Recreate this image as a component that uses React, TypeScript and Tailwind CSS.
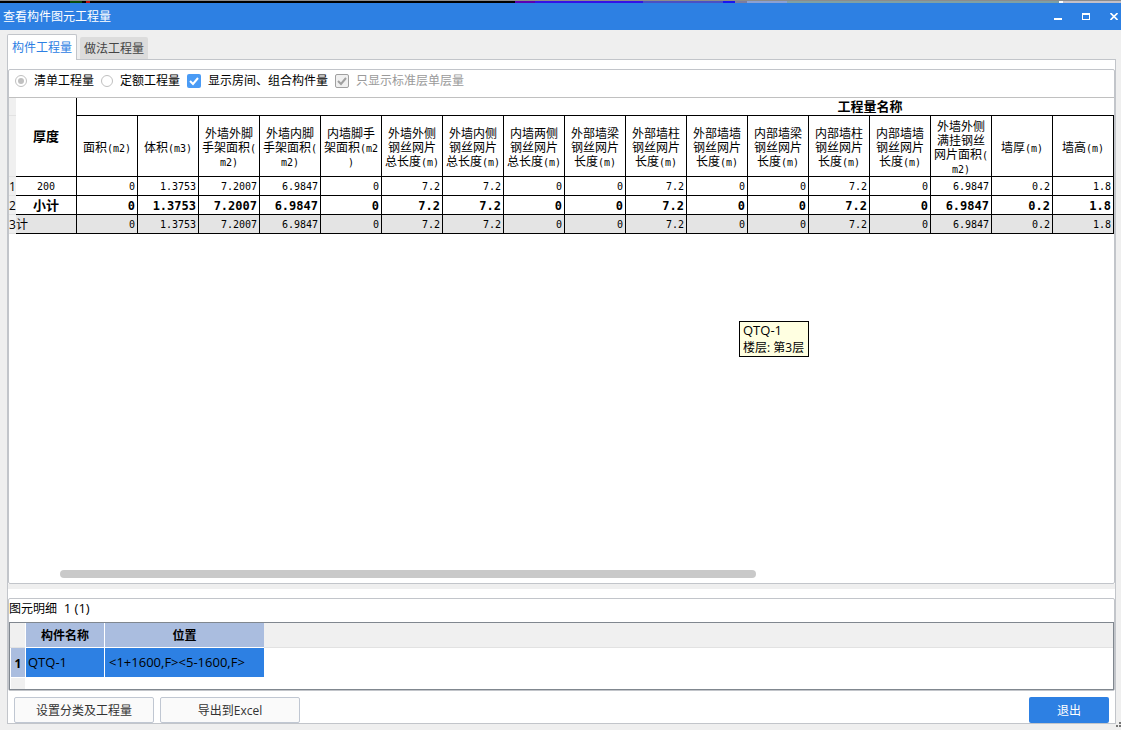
import type { ReactNode } from "react";

const uiFont = "font-['Open_Sans','Noto_Sans_CJK_SC',sans-serif]";
const gridFont = "font-['DejaVu_Sans_Mono','Noto_Sans_CJK_SC',monospace]";

const columns = [
  { lines: ["面积(m2)"], value: "0" },
  { lines: ["体积(m3)"], value: "1.3753" },
  { lines: ["外墙外脚", "手架面积(", "m2)"], value: "7.2007" },
  { lines: ["外墙内脚", "手架面积(", "m2)"], value: "6.9847" },
  { lines: ["内墙脚手", "架面积(m2", ")"], value: "0" },
  { lines: ["外墙外侧", "钢丝网片", "总长度(m)"], value: "7.2" },
  { lines: ["外墙内侧", "钢丝网片", "总长度(m)"], value: "7.2" },
  { lines: ["内墙两侧", "钢丝网片", "总长度(m)"], value: "0" },
  { lines: ["外部墙梁", "钢丝网片", "长度(m)"], value: "0" },
  { lines: ["外部墙柱", "钢丝网片", "长度(m)"], value: "7.2" },
  { lines: ["外部墙墙", "钢丝网片", "长度(m)"], value: "0" },
  { lines: ["内部墙梁", "钢丝网片", "长度(m)"], value: "0" },
  { lines: ["内部墙柱", "钢丝网片", "长度(m)"], value: "7.2" },
  { lines: ["内部墙墙", "钢丝网片", "长度(m)"], value: "0" },
  { lines: ["外墙外侧", "满挂钢丝", "网片面积(", "m2)"], value: "6.9847" },
  { lines: ["墙厚(m)"], value: "0.2" },
  { lines: ["墙高(m)"], value: "1.8" },
];

// the group header runs on past the visible columns
const totalColumns = 26;

const rows = [
  { label: "200", row: "", labelClass: "text-center text-[10px]", valueClass: "text-[10px]" },
  { label: "小计", row: "font-bold", labelClass: "text-center text-[13px]", valueClass: "text-xs" },
  { label: "计", row: "bg-[#e4e4e4]", labelClass: "text-left text-xs", valueClass: "text-[10px]" },
];

// Latin characters are half the width of a Chinese one
function HeaderLine({ text }: { text: string }) {
  const at = text.search(/[(m)]/);
  if (at < 0) return <span className="block">{text}</span>;
  return (
    <span className="block">
      {text.slice(0, at)}
      <span className="text-[10px] leading-none">{text.slice(at)}</span>
    </span>
  );
}

function BackgroundStrip() {
  return (
    <div className="flex h-[3px] border-t border-[#8c8c8c] bg-black">
      <span className="ml-[70px] w-3 bg-[#0a4a0a]" />
      <span className="ml-1 w-1 bg-[#c01010]" />
      <span className="ml-[425px] w-5 bg-[#5a00b4]" />
      <span className="w-[108px] bg-[#3412e6]" />
      <span className="w-20 bg-[#4a50c4]" />
      <span className="w-3 bg-[#1a14f0]" />
      <span className="w-3 bg-[#7c7ca0]" />
      <span className="w-10 bg-[#8ba0d4]" />
      <span className="flex-1 bg-[#7fa0a4]" />
      <span className="w-1 bg-white" />
      <span className="w-[58px] bg-[#c4c0c8]" />
    </div>
  );
}

function TitleBar() {
  return (
    <header className="flex h-[27px] items-center justify-between bg-[#2d80e3] pr-[3px] pl-[3px] text-white">
      <h1 className="text-xs">查看构件图元工程量</h1>
      <div className="flex gap-5">
        <button aria-label="最小化">
          <svg width="8" height="7" viewBox="0 0 8 7" fill="currentColor" shapeRendering="crispEdges">
            <path d="M0 5h8v2H0z" />
          </svg>
        </button>
        <button aria-label="最大化">
          <svg width="8" height="7" viewBox="0 0 8 7" fill="currentColor" shapeRendering="crispEdges">
            <path fillRule="evenodd" d="M0 0h8v7H0zM1 2v4h6V2z" />
          </svg>
        </button>
        <button aria-label="关闭">
          <svg width="8" height="7" viewBox="0 0 8 7" stroke="currentColor" strokeWidth="1.6">
            <path d="M.5 0l7 7M7.5 0l-7 7" />
          </svg>
        </button>
      </div>
    </header>
  );
}

function Radio({ label, checked }: { label: string; checked?: boolean }) {
  return (
    <label className="flex items-center gap-[7px]">
      <input
        type="radio"
        name="mode"
        defaultChecked={checked}
        className="size-3 appearance-none rounded-full border border-[#c0c0c0] bg-white bg-clip-content p-[2px] checked:bg-[#c0c0c0]"
      />
      {label}
    </label>
  );
}

function Check({ label, disabled }: { label: string; disabled?: boolean }) {
  return (
    <label className={`flex items-center gap-[7px] ${disabled ? "text-[#9a9a9a]" : ""}`}>
      <span className="grid size-3.5">
        <input
          type="checkbox"
          defaultChecked
          disabled={disabled}
          className="col-start-1 row-start-1 size-3.5 appearance-none rounded-xs bg-[#4a9bf5] disabled:border disabled:border-[#a0a0a0] disabled:bg-[#f0f0f0]"
        />
        <svg
          viewBox="0 0 14 14"
          fill="none"
          strokeWidth="2"
          className={`pointer-events-none col-start-1 row-start-1 size-3.5 ${disabled ? "stroke-[#a0a0a0]" : "stroke-white"}`}
        >
          <path d="M3 7l3 3 5-6" />
        </svg>
      </span>
      {label}
    </label>
  );
}

function RowNumber({ children }: { children?: ReactNode }) {
  return (
    <th className={`border-b border-[#e2e2e2] bg-[#f0f0f0] pt-0.5 text-xs leading-4 font-normal ${uiFont}`}>
      {children}
    </th>
  );
}

function QuantityTable() {
  return (
    <table className={`w-max table-fixed border-separate border-spacing-0 text-black ${gridFont}`}>
      <colgroup>
        <col className="w-[7px]" />
        {Array.from({ length: totalColumns + 1 }, (_, i) => (
          <col key={i} className="w-[61px]" />
        ))}
      </colgroup>
      <thead>
        <tr className="h-[18px] text-[13px] leading-4">
          <RowNumber />
          <th rowSpan={2} className="border-r border-b border-black">
            厚度
          </th>
          <th colSpan={totalColumns} className="border-b border-black pt-px">
            工程量名称
          </th>
        </tr>
        <tr className="h-[61px] text-xs leading-[14px]">
          <RowNumber />
          {columns.map((column) => (
            <th
              key={column.lines.join("")}
              className="border-r border-b border-black pt-[3px] font-normal whitespace-nowrap"
            >
              {column.lines.map((line) => (
                <HeaderLine key={line} text={line} />
              ))}
            </th>
          ))}
        </tr>
      </thead>
      <tbody>
        {rows.map((row, i) => (
          <tr key={row.label} className={`h-[19px] leading-4 ${row.row}`}>
            <RowNumber>{i + 1}</RowNumber>
            <td className={`border-r border-b border-black pt-0.5 ${row.labelClass}`}>{row.label}</td>
            {columns.map((column) => (
              <td
                key={column.lines.join("")}
                className={`border-r border-b border-black pt-0.5 pr-0.5 text-right ${row.valueClass}`}
              >
                {column.value}
              </td>
            ))}
          </tr>
        ))}
      </tbody>
    </table>
  );
}

function DetailTable() {
  return (
    <div className="h-[68px] border border-[#80878f] bg-[linear-gradient(to_bottom,#f0f0f0_24px,#e2e2e2_24px,#e2e2e2_25px,#fff_25px)] pl-px">
      <table className="table-fixed border-separate border-spacing-0 text-black">
        <colgroup>
          <col className="w-[14px]" />
          <col className="w-[79px]" />
          <col className="w-[160px]" />
        </colgroup>
        <thead>
          <tr className="h-[25px] text-xs">
            <th className="border-b border-[#e2e2e2] bg-[#f0f0f0]" />
            <th className="border-b border-l border-white bg-[#aabddf] pt-0.5">构件名称</th>
            <th className="border-b border-l border-white bg-[#aabddf] pt-0.5">位置</th>
          </tr>
        </thead>
        <tbody>
          <tr className="h-[30px] text-[13px]">
            <th className="border-b border-white bg-[#aabddf] pt-0.5 text-xs">1</th>
            <td className="border-b border-l border-white bg-[#2d80e3] pl-0.5">QTQ-1</td>
            <td className="border-b border-l border-white bg-[#2d80e3] pl-1 whitespace-nowrap">
              &lt;1+1600,F&gt;&lt;5-1600,F&gt;
            </td>
          </tr>
          <tr className="h-[11px]">
            <td className="bg-[#f0f0f0]" />
          </tr>
        </tbody>
      </table>
    </div>
  );
}

export default function App() {
  return (
    <div className={`flex min-h-screen flex-col bg-[#efefef] text-xs text-black ${uiFont}`}>
      <BackgroundStrip />
      <TitleBar />

      <main className="flex flex-1 flex-col pt-1 pr-[5px] pl-[7px]">
        <nav className="flex items-end gap-[3px]">
          <button className="z-10 -mb-px h-[26px] w-[70px] rounded-t-xs border border-b-0 border-[#c2c5ca] bg-white text-[#2d80e3]">
            构件工程量
          </button>
          <button className="h-[22px] w-[68px] rounded-t-xs bg-[#dcdcdc] pt-0.5 text-[#444]">做法工程量</button>
        </nav>

        <div className="flex flex-1 flex-col border border-[#c2c5ca] bg-white pt-[9px]">
          <section className="flex flex-1 flex-col overflow-hidden rounded-xs border border-[#c2c5ca]">
            <form className="flex h-[28px] items-center gap-[7px] border-b border-[#c0c0c0] pb-1.5 pl-1.5">
              <Radio label="清单工程量" checked />
              <Radio label="定额工程量" />
              <Check label="显示房间、组合构件量" />
              <Check label="只显示标准层单层量" disabled />
            </form>
            <div className="relative flex-1 overflow-hidden">
              {/* keeps the wide table out of the page's own width */}
              <div className="grid grid-cols-[minmax(0,1fr)] overflow-hidden">
                <QuantityTable />
              </div>
              <div
                role="tooltip"
                className="absolute top-[223px] left-[730px] h-9 w-[70px] border border-black bg-[#ffffe1] pl-[3px] leading-[17px] whitespace-nowrap"
              >
                <p className="text-[13px]">QTQ-1</p>
                <p>楼层: 第3层</p>
              </div>
            </div>
            <div className="mb-[5px] ml-[51px] h-2 w-[63%] rounded-full bg-[#c9c9c9]" />
          </section>

          <div className="h-[5px] bg-[#efefef]" />

          <section className="mt-[9px] rounded-xs border border-[#c2c5ca]">
            <h2 className="h-[23px] leading-[18px] whitespace-pre">
              图元明细<span className="text-[13px]">  1 (1)</span>
            </h2>
            <DetailTable />
          </section>

          <footer className="flex gap-1.5 pt-1.5 pr-1.5 pl-1.5">
            <button className="h-[26px] w-[140px] rounded-xs border border-[#c0c7d2] bg-[#fafafa] pt-0.5 text-[#333]">
              设置分类及工程量
            </button>
            <button className="h-[26px] w-[140px] rounded-xs border border-[#c0c7d2] bg-[#fafafa] pt-0.5 text-[#333]">
              导出到Excel
            </button>
            <button className="ml-auto h-[26px] w-20 rounded-xs bg-[#2d80e3] pt-0.5 text-white">退出</button>
          </footer>
        </div>
      </main>

      <div className="flex h-1.5 justify-end">
        <svg width="5" height="5" viewBox="0 0 5 5" fill="#777" shapeRendering="crispEdges" className="-mt-0.5">
          <path d="M3 0h2v2H3zM0 3h2v2H0zM3 3h2v2H3z" />
        </svg>
      </div>
    </div>
  );
}
